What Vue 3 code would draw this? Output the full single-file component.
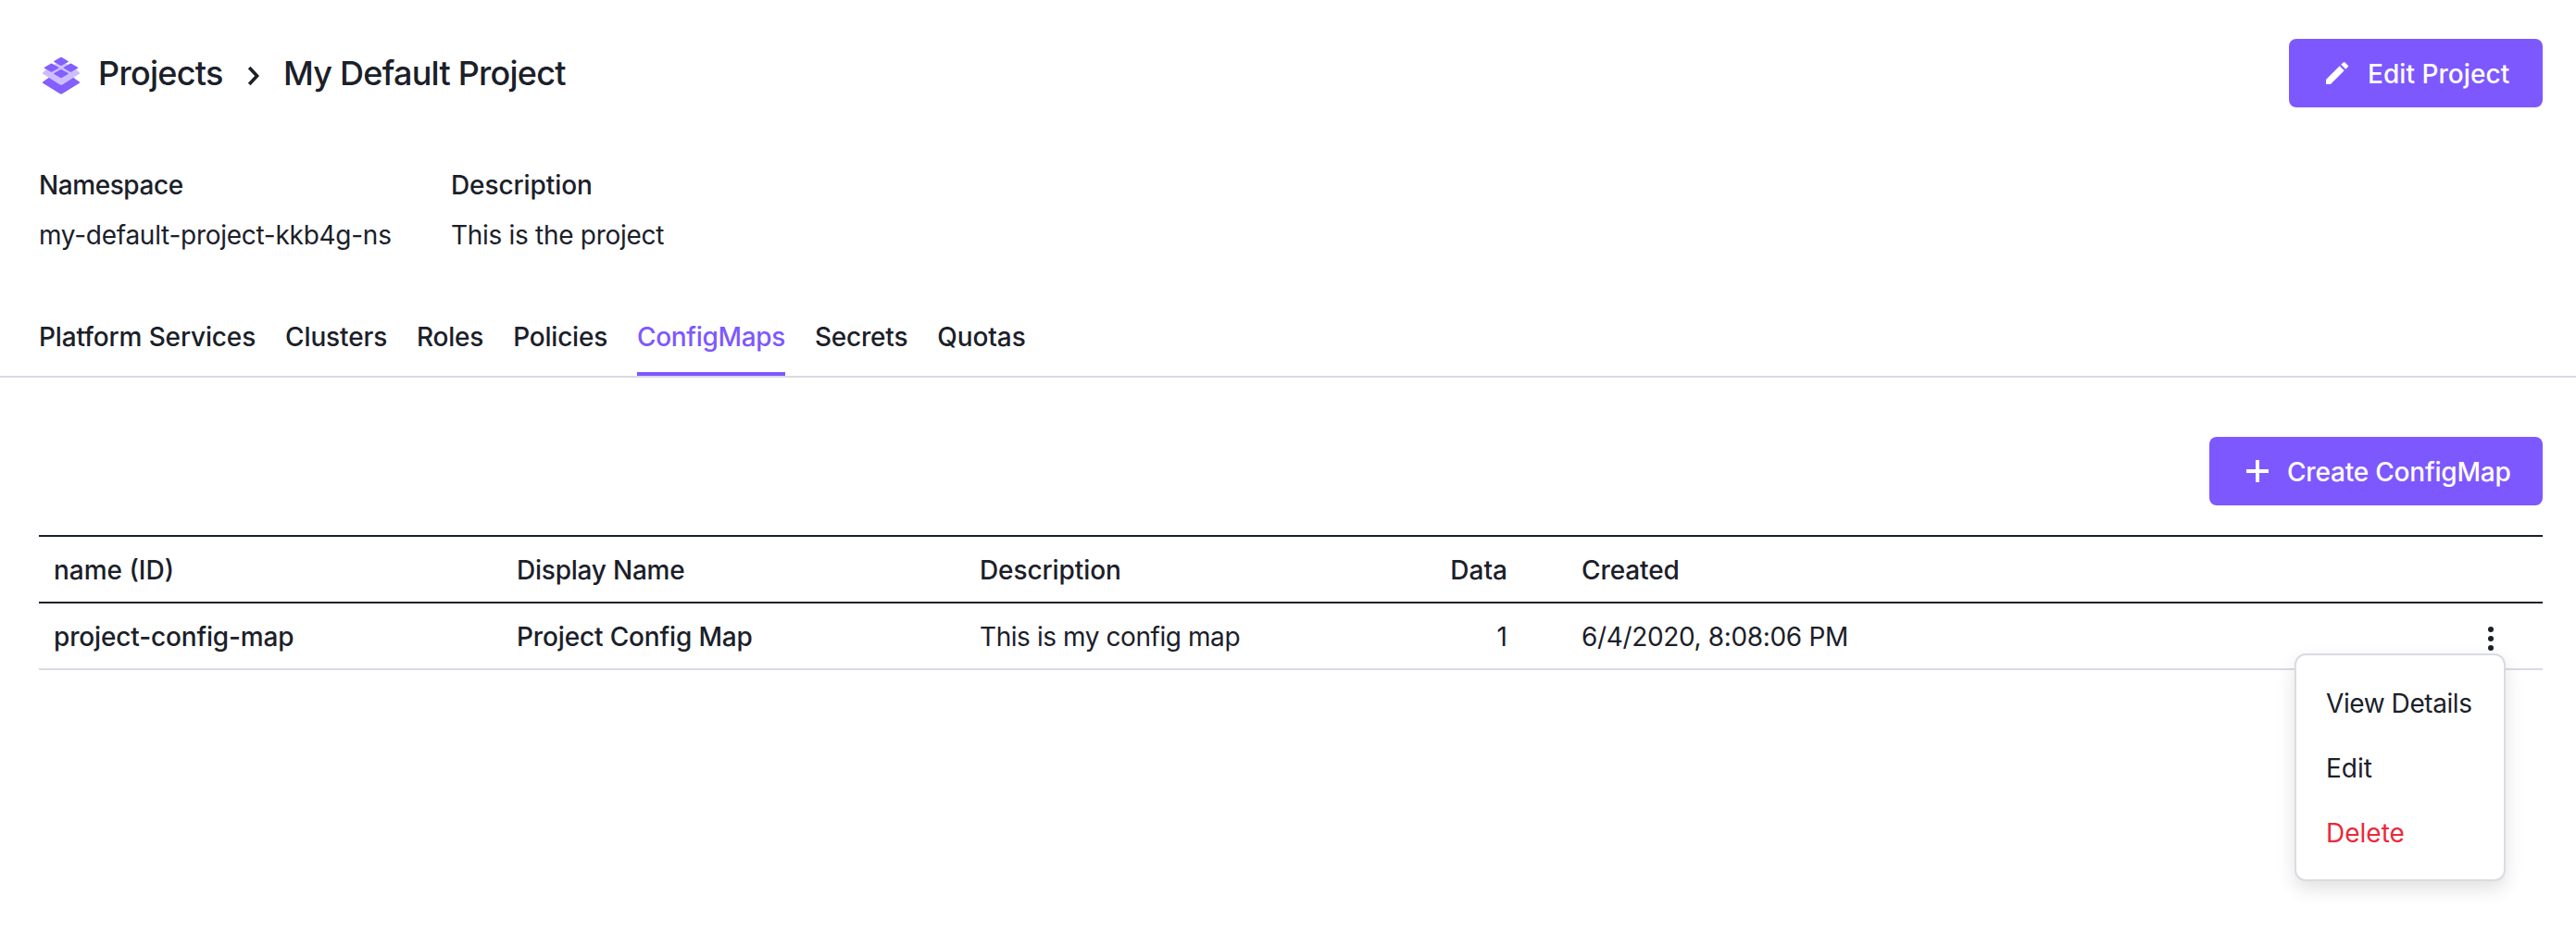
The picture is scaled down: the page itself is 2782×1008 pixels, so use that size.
<script setup>
const tabs = [
  { id: 'services', label: 'Platform Services' },
  { id: 'clusters', label: 'Clusters' },
  { id: 'roles', label: 'Roles' },
  { id: 'policies', label: 'Policies' },
  { id: 'configmaps', label: 'ConfigMaps', active: true },
  { id: 'secrets', label: 'Secrets' },
  { id: 'quotas', label: 'Quotas' }
]
const rows = [
  {
    id: 'project-config-map',
    name: 'Project Config Map',
    description: 'This is my config map',
    data: 1,
    created: '6/4/2020, 8:08:06 PM'
  }
]
</script>

<template>
  <main class="page">
    <header class="header">
      <h1 class="breadcrumb">
        <svg class="logo" width="42" height="42" viewBox="0 0 42 42">
          <path class="deep" d="M7.5 23 L21 20 L34.5 23 L40.8 27.4 Q41.8 28.1 40.8 28.8 L22.3 40.2 Q21 41 19.7 40.2 L1.2 28.8 Q0.2 28.1 1.2 27.4 Z" />
          <path class="pale" d="M5.5 13.8 L21 4.5 L36.5 13.8 L40.8 17.2 Q41.8 18 40.8 18.8 L22.3 30.4 Q21 31.2 19.7 30.4 L1.2 18.8 Q0.2 18 1.2 17.2 Z" />
          <path class="deep" d="M20.2 1 Q21 .5 21.8 1 L28.6 4.9 Q29.4 5.4 28.6 5.9 L21.8 9.8 Q21 10.3 20.2 9.8 L13.4 5.9 Q12.6 5.4 13.4 4.9 Z" />
          <path class="deep" d="M9.8 7.8 Q10.6 7.3 11.4 7.8 L18.2 11.7 Q19 12.2 18.2 12.7 L11.4 16.6 Q10.6 17.1 9.8 16.6 L3 12.7 Q2.2 12.2 3 11.7 Z" />
          <path class="deep" d="M30.6 7.8 Q31.4 7.3 32.2 7.8 L39 11.7 Q39.8 12.2 39 12.7 L32.2 16.6 Q31.4 17.1 30.6 16.6 L23.8 12.7 Q23 12.2 23.8 11.7 Z" />
          <path class="deep" d="M20.2 14.2 Q21 13.7 21.8 14.2 L28.6 18.1 Q29.4 18.6 28.6 19.1 L21.8 23 Q21 23.5 20.2 23 L13.4 19.1 Q12.6 18.6 13.4 18.1 Z" />
        </svg>
        <a class="crumb root">Projects</a>
        <svg class="chevron" width="14" height="22" viewBox="0 0 14 22">
          <path d="M2.2 2 L10.6 11 L2.2 20" />
        </svg>
        <span class="crumb current">My Default Project</span>
      </h1>
      <button class="button edit">
        <svg width="32" height="32" viewBox="0 0 24 24">
          <path d="M3 17.25V21h3.75L17.81 9.94l-3.75-3.75L3 17.25zM20.71 7.04a1 1 0 0 0 0-1.41l-2.34-2.34a1 1 0 0 0-1.41 0l-1.83 1.83 3.75 3.75 1.83-1.83z" />
        </svg>
        <span>Edit Project</span>
      </button>
    </header>

    <dl class="details">
      <div class="detail namespace">
        <dt>Namespace</dt>
        <dd>my-default-project-kkb4g-ns</dd>
      </div>
      <div class="detail about">
        <dt>Description</dt>
        <dd>This is the project</dd>
      </div>
    </dl>

    <nav class="tabs">
      <a v-for="tab in tabs" :key="tab.id" class="tab" :class="[tab.id, { active: tab.active }]">{{ tab.label }}</a>
    </nav>

    <section class="content">
      <div class="toolbar">
        <button class="button create">
          <svg width="32" height="32" viewBox="0 0 32 32">
            <path d="M14 4h4v10h10v4H18v10h-4V18H4v-4h10z" />
          </svg>
          <span>Create ConfigMap</span>
        </button>
      </div>

      <div class="table">
        <div class="row head">
          <span class="cell id">name (ID)</span>
          <span class="cell name">Display Name</span>
          <span class="cell description">Description</span>
          <span class="cell data">Data</span>
          <span class="cell created">Created</span>
        </div>
        <div v-for="row in rows" :key="row.id" class="row body">
          <span class="cell id">{{ row.id }}</span>
          <span class="cell name">{{ row.name }}</span>
          <span class="cell description">{{ row.description }}</span>
          <span class="cell data">{{ row.data }}</span>
          <span class="cell created">{{ row.created }}</span>
          <div class="actions">
            <svg class="dots" width="6" height="26" viewBox="0 0 6 26">
              <circle cx="3" cy="3" r="3" />
              <circle cx="3" cy="13" r="3" />
              <circle cx="3" cy="23" r="3" />
            </svg>
            <div class="menu">
              <a class="item view">View Details</a>
              <a class="item">Edit</a>
              <a class="item delete">Delete</a>
            </div>
          </div>
        </div>
      </div>
    </section>
  </main>
</template>

<style>
body {
  margin: 0;
  background: #fff;
}
</style>

<style scoped>
.page {
  box-sizing: border-box;
  min-height: 1008px;
  padding-top: 42px;
  font: 400 28px/40px Inter, "Liberation Sans", sans-serif;
  color: #1b2029;
  white-space: nowrap;
}
.header {
  display: flex;
  align-items: center;
  justify-content: space-between;
  padding: 0 36px 0 42px;
}
.breadcrumb {
  display: flex;
  align-items: center;
  margin: 0;
  font-size: 36px;
  font-weight: 500;
  line-height: 48px;
}
.logo {
  margin: 6px 19px 0 3px;
}
.deep { fill: #835ffe; }
.pale { fill: #cdbfff; }
.root {
  width: 135px;
  letter-spacing: -0.7px;
}
.chevron {
  margin: 5px 25px 0 26px;
  fill: none;
  stroke: #1b2029;
  stroke-width: 3.6;
}
.current {
  letter-spacing: -0.76px;
}
.button {
  display: flex;
  align-items: center;
  box-sizing: border-box;
  height: 74px;
  padding: 0 0 0 36px;
  border: 0;
  border-radius: 8px;
  background: #7d58ff;
  color: #fff;
  font: inherit;
  font-weight: 500;
}
.button svg {
  fill: #fff;
}
.button span {
  padding-top: 1px;
}
.edit {
  width: 274px;
  gap: 17px;
  letter-spacing: 0.05px;
}
.create {
  width: 360px;
  gap: 16px;
  letter-spacing: -0.2px;
}
.details {
  display: flex;
  margin: 64px 42px 0;
}
.detail {
  display: flex;
  flex-direction: column;
  gap: 14px;
}
.detail dt {
  font-weight: 500;
}
.detail dd {
  margin: 0;
}
.namespace {
  width: 445px;
}
.namespace dt { letter-spacing: -0.42px; }
.namespace dd { letter-spacing: -0.27px; }
.about dt { letter-spacing: -0.1px; }
.about dd { letter-spacing: -0.3px; }
.tabs {
  display: flex;
  gap: 32px;
  margin-top: 70px;
  padding: 0 42px;
  border-bottom: 2px solid #dadbe2;
}
.tab {
  padding-bottom: 18px;
  border-bottom: 4px solid transparent;
  font-weight: 500;
}
.tab.active {
  border-color: #7d58ff;
  color: #7d58ff;
}
.services { letter-spacing: -0.15px; }
.clusters { letter-spacing: -0.14px; }
.roles { letter-spacing: -0.25px; }
.policies { letter-spacing: -0.2px; }
.configmaps { letter-spacing: -0.34px; }
.secrets { letter-spacing: -0.2px; }
.quotas { letter-spacing: -0.1px; }
.content {
  padding: 64px 36px 0 42px;
}
.toolbar {
  display: flex;
  justify-content: flex-end;
}
.table {
  margin-top: 32px;
  border-top: 2px solid #1b2029;
}
.row {
  display: grid;
  grid-template-columns: 500px 500px 500px 102px 1fr 112px;
  height: 70px;
  border-bottom: 2px solid #dadbe2;
}
.row.head {
  border-color: #1b2029;
  font-weight: 500;
}
.cell {
  padding: 2px 16px 0;
  line-height: 68px;
}
.data {
  text-align: right;
}
.created {
  padding-left: 64px;
}
.head .name { letter-spacing: -0.22px; }
.head .description,
.head .created { letter-spacing: -0.1px; }
.body .id,
.body .name {
  font-weight: 500;
  letter-spacing: -0.15px;
}
.body .description { letter-spacing: -0.43px; }
.body .created { letter-spacing: -0.35px; }
.actions {
  position: relative;
  display: flex;
  justify-content: center;
  align-items: flex-start;
  padding-top: 25px;
}
.dots {
  fill: #1b2029;
}
.menu {
  position: absolute;
  top: 54px;
  right: 40px;
  box-sizing: border-box;
  width: 228px;
  height: 246px;
  padding: 17px 0 0 32px;
  border: 2px solid #dadbe2;
  border-radius: 12px;
  background: #fff;
  box-shadow: 0 8px 20px rgba(0, 0, 0, 0.12);
}
.item {
  display: block;
  line-height: 70px;
}
.view { letter-spacing: -0.42px; }
.delete { color: #eb293a; }
</style>
